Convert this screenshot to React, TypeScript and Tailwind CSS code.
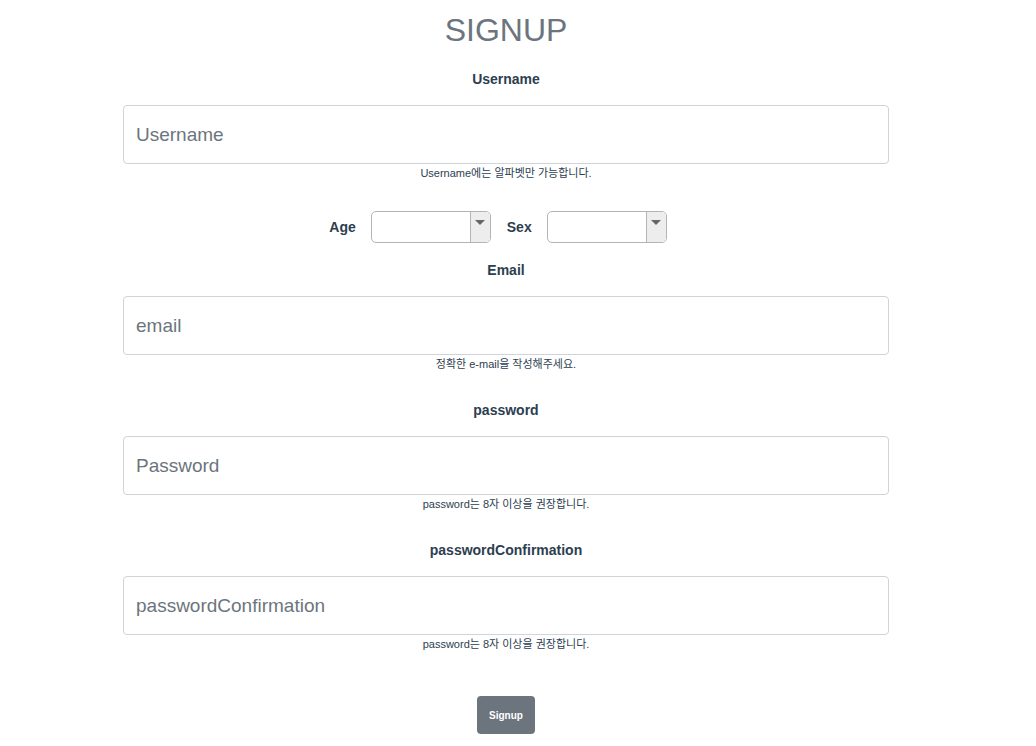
type FieldProps = {
  id: string;
  label: string;
  placeholder: string;
  hint: string;
  type?: string;
};

function Field({ id, label, placeholder, hint, type = 'text' }: FieldProps) {
  return (
    <div className="flex w-full flex-col items-center">
      <label htmlFor={id} className="text-sm leading-6 font-bold">
        {label}
      </label>
      <input
        id={id}
        type={type}
        placeholder={placeholder}
        aria-describedby={`${id}-hint`}
        className="mt-3.5 w-full rounded border border-[#ced4da] bg-white px-3 py-4 text-[19px] leading-[25px] text-[#495057] placeholder:text-[#6c757d]"
      />
      <small id={`${id}-hint`} className="text-[11px] leading-[18px]">
        {hint}
      </small>
    </div>
  );
}

function Picker({ id, label, options }: { id: string; label: string; options: string[] }) {
  return (
    <div className="flex items-center gap-[15px]">
      <label htmlFor={id} className="text-sm leading-6 font-bold">
        {label}
      </label>
      <div className="relative">
        <select
          id={id}
          defaultValue=""
          className="block h-8 w-30 appearance-none rounded-[5px] border border-[#b4b4b4] bg-white pr-6 pl-2 text-sm"
        >
          <option value=""></option>
          {options.map((option) => (
            <option key={option}>{option}</option>
          ))}
        </select>
        <span className="pointer-events-none absolute inset-y-px right-px flex w-5 justify-center rounded-r border-l border-[#b4b4b4] bg-[#ededed] pt-2">
          <svg width="10" height="5" viewBox="0 0 10 5" fill="#666" aria-hidden="true">
            <path d="M0 0h10L5 5z" />
          </svg>
        </span>
      </div>
    </div>
  );
}

export default function App() {
  return (
    <main className="bg-white pr-6 pb-3 font-['Liberation_Sans','Noto_Sans_CJK_KR',sans-serif] text-[#2c3e50]">
      <form className="mx-auto flex w-full max-w-[766px] flex-col items-center pt-2.5" onSubmit={(e) => e.preventDefault()}>
        <h1 className="text-[32px] leading-10 text-[#6c757d]">SIGNUP</h1>
        <div className="mt-[17px] w-full">
          <Field id="username" label="Username" placeholder="Username" hint="Username에는 알파벳만 가능합니다." />
        </div>
        <div className="mt-[29px] mb-[15px] flex gap-4 pr-4">
          <Picker id="age" label="Age" options={['10', '20', '30', '40', '50']} />
          <Picker id="sex" label="Sex" options={['Male', 'Female']} />
        </div>
        <div className="flex w-full flex-col gap-[25px]">
          <Field id="email" label="Email" placeholder="email" hint="정확한 e-mail을 작성해주세요." type="email" />
          <Field id="password" label="password" placeholder="Password" hint="password는 8자 이상을 권장합니다." type="password" />
          <Field
            id="password-confirmation"
            label="passwordConfirmation"
            placeholder="passwordConfirmation"
            hint="password는 8자 이상을 권장합니다."
            type="password"
          />
        </div>
        <button type="submit" className="mt-[43px] h-[38px] rounded bg-[#6c757d] px-3 text-[10px] font-bold text-white">
          Signup
        </button>
      </form>
    </main>
  );
}
